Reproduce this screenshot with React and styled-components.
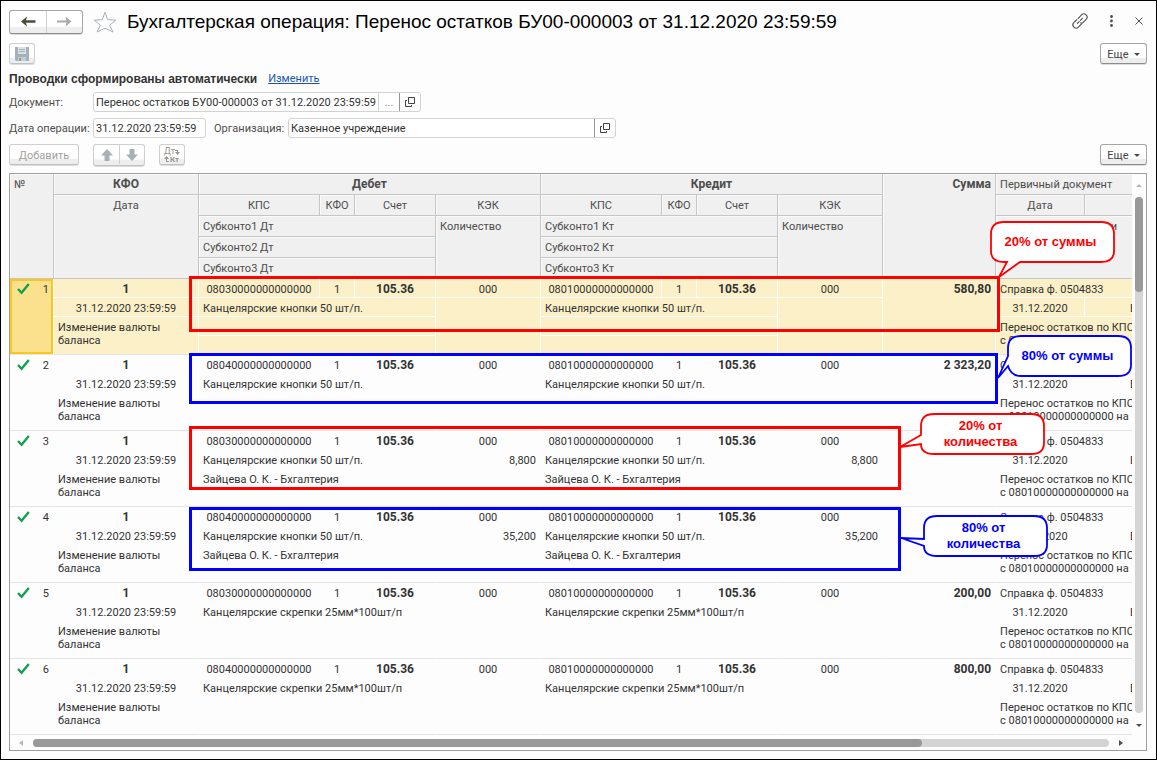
import styled, { createGlobalStyle, css } from "styled-components";

const Colors = {
    page: "#fdfdfd",
    text: "#333333",
    label: "#4d4d4d",
    head: "#f0f0f0",
    line: "#c6c6c6",
    rowLine: "#e4e4e4",
    frame: "#a0a0a0",
    selected: "#fcf0c8",
    current: "#fbe18d",
    currentLine: "#fac71e",
    red: "#ff0000",
    blue: "#0000ff"
};

const GlobalStyle = createGlobalStyle`
    * {
        box-sizing: border-box;
    }

    body {
        margin: 0;
        background: ${Colors.page};
        color: ${Colors.text};
        font-family: Roboto, "Liberation Sans", sans-serif;
        font-size: 11px;
        line-height: 13px;
    }

    button, input {
        font: inherit;
        color: inherit;
    }
`;

const columns = [44, 145, 121, 35, 81, 105, 121, 35, 81, 105, 113, 89, 190];

const entries = [
    { debit: "08030000000000000", sum: "580,80", item: "Канцелярские кнопки 50 шт/п." },
    { debit: "08040000000000000", sum: "2 323,20", item: "Канцелярские кнопки 50 шт/п." },
    {
        debit: "08030000000000000",
        sum: "",
        item: "Канцелярские кнопки 50 шт/п.",
        person: "Зайцева О. К. - Бхгалтерия",
        count: "8,800"
    },
    {
        debit: "08040000000000000",
        sum: "",
        item: "Канцелярские кнопки 50 шт/п.",
        person: "Зайцева О. К. - Бхгалтерия",
        count: "35,200"
    },
    { debit: "08030000000000000", sum: "200,00", item: "Канцелярские скрепки 25мм*100шт/п" },
    { debit: "08040000000000000", sum: "800,00", item: "Канцелярские скрепки 25мм*100шт/п" }
];

// left / top are counted from the inner corner of the grid
const frames = [
    { left: 179, top: 102, width: 811, height: 56, color: Colors.red },
    { left: 179, top: 179, width: 809, height: 51, color: Colors.blue },
    { left: 179, top: 252, width: 712, height: 64, color: Colors.red },
    { left: 179, top: 333, width: 712, height: 64, color: Colors.blue }
];

const callouts = [
    {
        left: 980,
        top: 47,
        color: Colors.red,
        text: "20% от суммы",
        d: "M14 1H111Q124 1 124 13V30Q124 41 111 41H30L9 56L17 41H14Q1 41 1 30V13Q1 1 14 1Z"
    },
    {
        left: 997,
        top: 161,
        color: Colors.blue,
        text: "80% от суммы",
        d: "M14 1H111Q124 1 124 13V30Q124 41 111 41H14Q4 41 1 31L-9 43L1 21V13Q1 1 14 1Z"
    },
    {
        left: 910,
        top: 239,
        color: Colors.red,
        text: "20% от количества",
        d: "M14 1H111Q124 1 124 13V30Q124 41 111 41H14Q1 41 1 31L-20 34L1 22V13Q1 1 14 1Z"
    },
    {
        left: 913,
        top: 341,
        color: Colors.blue,
        text: "80% от количества",
        d: "M14 1H111Q124 1 124 13V30Q124 41 111 41H14Q1 41 1 31L-22 23L1 24V13Q1 1 14 1Z"
    }
];

function OpenIcon() {
    return (
        <svg width="10" height="10" viewBox="0 0 10 10" fill="none" stroke="#404040">
            <path d="M3.5 0.5H9.5V6.5H3.5ZM2 3.5H0.5V9.5H6.5V8" />
        </svg>
    );
}

function CheckIcon() {
    return (
        <svg width="13" height="12" viewBox="0 0 13 12" fill="none" stroke="#12a04c" strokeWidth="2.4">
            <path d="M1 6L4.6 9.8L11.8 1" />
        </svg>
    );
}

function MoreButton() {
    return (
        <Button $width={47}>
            Еще
            <svg width="6" height="3" viewBox="0 0 6 3" fill="#4a4a4a">
                <path d="M0 0H6L3 3Z" />
            </svg>
        </Button>
    );
}

function AccountCells({ code, $selected }) {
    return (
        <>
            <Cell $selected={$selected}>{code}</Cell>
            <Cell $selected={$selected}>1</Cell>
            <Cell $selected={$selected} $bold>
                105.36
            </Cell>
            <Cell $selected={$selected}>000</Cell>
        </>
    );
}

function ItemCells({ item, count, $selected }) {
    return (
        <>
            <Cell $selected={$selected} $align="left" colSpan={3}>
                {item}
            </Cell>
            <Cell $selected={$selected} $align="right" $last rowSpan={3}>
                {count}
            </Cell>
        </>
    );
}

function Entry({ entry, index }) {
    const $selected = index === 0;
    const { debit, sum, item, person, count } = entry;
    return (
        <>
            <tr>
                <NumberCell rowSpan={4} $selected={$selected}>
                    <NumberLine>
                        <CheckIcon />
                        {index + 1}
                    </NumberLine>
                </NumberCell>
                <Cell $selected={$selected} $bold>
                    1
                </Cell>
                {[debit, "08010000000000000"].map(code => (
                    <AccountCells key={code} code={code} $selected={$selected} />
                ))}
                <Cell $selected={$selected} $align="right" $bold $last rowSpan={4}>
                    {sum}
                </Cell>
                <Cell $selected={$selected} $align="left" colSpan={2}>
                    Справка ф. 0504833
                </Cell>
            </tr>
            <tr>
                <Cell $selected={$selected}>31.12.2020 23:59:59</Cell>
                {["debit", "credit"].map(side => (
                    <ItemCells key={side} item={item} count={count} $selected={$selected} />
                ))}
                <Cell $selected={$selected}>31.12.2020</Cell>
                <Cell $selected={$selected} $align="left" $indent>
                    БУ00-000003
                </Cell>
            </tr>
            <tr>
                <Cell $selected={$selected} $align="left" $last rowSpan={2}>
                    Изменение валюты баланса
                </Cell>
                <Cell $selected={$selected} $align="left" colSpan={3}>
                    {person}
                </Cell>
                <Cell $selected={$selected} $align="left" colSpan={3}>
                    {person}
                </Cell>
                <Cell $selected={$selected} $align="left" $last colSpan={2} rowSpan={2}>
                    Перенос остатков по КПС
                    <br />с 08010000000000000 на ...
                </Cell>
            </tr>
            <tr>
                <Cell $selected={$selected} $last colSpan={3} />
                <Cell $selected={$selected} $last colSpan={3} />
            </tr>
        </>
    );
}

function EntriesTable() {
    return (
        <Table>
            <colgroup>
                {columns.map((width, i) => (
                    <Column key={i} $width={width} />
                ))}
            </colgroup>
            <thead>
                <tr>
                    <Head $align="left" rowSpan={5}>
                        №
                    </Head>
                    <Head $bold>КФО</Head>
                    <Head $bold colSpan={4}>
                        Дебет
                    </Head>
                    <Head $bold colSpan={4}>
                        Кредит
                    </Head>
                    <Head $bold $align="right" rowSpan={5}>
                        Сумма
                    </Head>
                    <Head $align="left" colSpan={2}>
                        Первичный документ
                    </Head>
                </tr>
                <tr>
                    <Head rowSpan={4}>Дата</Head>
                    <Head>КПС</Head>
                    <Head>КФО</Head>
                    <Head>Счет</Head>
                    <Head>КЭК</Head>
                    <Head>КПС</Head>
                    <Head>КФО</Head>
                    <Head>Счет</Head>
                    <Head>КЭК</Head>
                    <Head>Дата</Head>
                    <Head>Номер</Head>
                </tr>
                <tr>
                    <Head $align="left" colSpan={3}>
                        Субконто1 Дт
                    </Head>
                    <Head $align="left" rowSpan={3}>
                        Количество
                    </Head>
                    <Head $align="left" colSpan={3}>
                        Субконто1 Кт
                    </Head>
                    <Head $align="left" rowSpan={3}>
                        Количество
                    </Head>
                    <Head $align="left" colSpan={2} rowSpan={3}>
                        Содержание операции
                    </Head>
                </tr>
                {[2, 3].map(n => (
                    <tr key={n}>
                        <Head $align="left" colSpan={3}>
                            Субконто{n} Дт
                        </Head>
                        <Head $align="left" colSpan={3}>
                            Субконто{n} Кт
                        </Head>
                    </tr>
                ))}
            </thead>
            <tbody>
                {entries.map((entry, i) => (
                    <Entry key={i} entry={entry} index={i} />
                ))}
            </tbody>
        </Table>
    );
}

function App() {
    return (
        <>
            <GlobalStyle />
            <Window>
                <TitleBar>
                    <ButtonGroup>
                        <NavButton aria-label="Назад">
                            <svg width="15" height="11" viewBox="0 0 15 11" fill="#4b4b3c">
                                <path d="M0 5.5L6 0.5L5 4.2H14.5V6.8H5L6 10.5Z" />
                            </svg>
                        </NavButton>
                        <NavButton aria-label="Вперед">
                            <svg width="15" height="11" viewBox="0 0 15 11" fill="#a9a9a9">
                                <path d="M14.5 5.5L8.5 0.5L9.5 4.4H0V6.6H9.5L8.5 10.5Z" />
                            </svg>
                        </NavButton>
                    </ButtonGroup>
                    <IconButton aria-label="Добавить в избранное">
                        <svg width="24" height="22" viewBox="0 0 24 22" fill="#ffffff" stroke="#aab0b5">
                            <path d="M12 1.2L14.7 8.7L22.8 9.2L16.6 14.2L20 21L12 17.2L4 21L7.4 14.2L1.2 9.2L9.3 8.7Z" />
                        </svg>
                    </IconButton>
                    <Title>Бухгалтерская операция: Перенос остатков БУ00-000003 от 31.12.2020 23:59:59</Title>
                    <WindowActions>
                        <IconButton aria-label="Ссылка">
                            <svg
                                width="16"
                                height="16"
                                viewBox="0 0 16 16"
                                fill="none"
                                stroke="#4d4d4d"
                                strokeWidth="1.1"
                                strokeLinecap="round"
                            >
                                <path d="M6.2 5.4L9.6 1.9A3.1 3.1 0 0 1 14.2 6.3L11.2 9.3A2.6 2.6 0 0 1 8.8 9.9" />
                                <path d="M9.8 10.6L6.4 14.1A3.1 3.1 0 0 1 1.8 9.7L4.8 6.7" />
                                <path d="M5.4 10.4L7.2 8.6M8.4 7.4L10.4 5.4" />
                            </svg>
                        </IconButton>
                        <IconButton aria-label="Меню">
                            <svg width="3" height="12" viewBox="0 0 3 12" fill="#4d4d4d">
                                <circle cx="1.5" cy="1.5" r="1.4" />
                                <circle cx="1.5" cy="6" r="1.4" />
                                <circle cx="1.5" cy="10.5" r="1.4" />
                            </svg>
                        </IconButton>
                        <IconButton aria-label="Закрыть">
                            <svg width="8" height="8" viewBox="0 0 8 8" stroke="#4d4d4d">
                                <path d="M0.5 0.5L7.5 7.5M7.5 0.5L0.5 7.5" />
                            </svg>
                        </IconButton>
                    </WindowActions>
                </TitleBar>
                <Toolbar>
                    <Button $width={26} $muted aria-label="Записать">
                        <svg width="14" height="14" viewBox="0 0 14 14">
                            <path d="M0 0H14V14H1L0 13Z" fill="#a3b1bb" />
                            <path d="M3 0H11V7H3Z" fill="#dce1e4" />
                            <path d="M4 2H10V3H4ZM4 4H10V5H4Z" fill="#a3b1bb" />
                            <path d="M3 10H11V14H3Z" fill="#c3ccd2" />
                            <path d="M4 11H6V14H4Z" fill="#8c9ba6" />
                        </svg>
                    </Button>
                    <MoreButton />
                </Toolbar>
                <Notice>
                    <strong>Проводки сформированы автоматически</strong>
                    <a href="#edit">Изменить</a>
                </Notice>
                <FieldRow>
                    <Label htmlFor="document" $wide>
                        Документ:
                    </Label>
                    <Field $width={328}>
                        <input
                            id="document"
                            type="text"
                            defaultValue="Перенос остатков БУ00-000003 от 31.12.2020 23:59:59"
                        />
                        <FieldButton aria-label="Выбрать" $light>
                            ...
                        </FieldButton>
                        <FieldButton aria-label="Открыть документ">
                            <OpenIcon />
                        </FieldButton>
                    </Field>
                </FieldRow>
                <FieldRow>
                    <Label htmlFor="date" $wide>
                        Дата операции:
                    </Label>
                    <Field $width={113}>
                        <input id="date" type="text" defaultValue="31.12.2020 23:59:59" />
                    </Field>
                    <Label htmlFor="organization">Организация:</Label>
                    <Field $width={328}>
                        <input id="organization" type="text" defaultValue="Казенное учреждение" />
                        <FieldButton aria-label="Открыть организацию">
                            <OpenIcon />
                        </FieldButton>
                    </Field>
                </FieldRow>
                <Toolbar>
                    <Commands>
                        <Button $width={70} $muted>
                            Добавить
                        </Button>
                        <ButtonGroup $muted>
                            <NavButton $small aria-label="Переместить вверх">
                                <svg width="12" height="12" viewBox="0 0 12 12" fill="#a7b0b6">
                                    <path d="M6 0L12 6.5H8.5V12H3.5V6.5H0Z" />
                                </svg>
                            </NavButton>
                            <NavButton $small aria-label="Переместить вниз">
                                <svg width="12" height="12" viewBox="0 0 12 12" fill="#a7b0b6">
                                    <path d="M6 12L12 5.5H8.5V0H3.5V5.5H0Z" />
                                </svg>
                            </NavButton>
                        </ButtonGroup>
                        <Button $width={26} $muted aria-label="Дт Кт">
                            <svg width="16" height="16" viewBox="0 0 16 16" fill="#9a9590">
                                <text x="0" y="7" fontSize="9">
                                    Дт
                                </text>
                                <text x="6" y="15" fontSize="8" fontWeight="700">
                                    Кт
                                </text>
                                <path d="M11 3H14V5H16L13.5 8L11 5H13V4H11Z" />
                                <path d="M5 15H2V12H0L2.5 9L5 12H3V14H5Z" />
                            </svg>
                        </Button>
                    </Commands>
                    <MoreButton />
                </Toolbar>
                <Grid>
                    <GridBody>
                        <Viewport>
                            <EntriesTable />
                        </Viewport>
                        <VerticalBar>
                            <svg width="6" height="3" viewBox="0 0 6 3" fill="#b8b8b8">
                                <path d="M0 3H6L3 0Z" />
                            </svg>
                            <VerticalTrack>
                                <VerticalThumb />
                            </VerticalTrack>
                            <svg width="6" height="3" viewBox="0 0 6 3" fill="#4d4d4d">
                                <path d="M0 0H6L3 3Z" />
                            </svg>
                        </VerticalBar>
                    </GridBody>
                    <HorizontalBar>
                        <svg width="4" height="6" viewBox="0 0 4 6" fill="#b8b8b8">
                            <path d="M4 0V6L0 3Z" />
                        </svg>
                        <HorizontalTrack>
                            <HorizontalThumb />
                        </HorizontalTrack>
                        <svg width="4" height="6" viewBox="0 0 4 6" fill="#4d4d4d">
                            <path d="M0 0V6L4 3Z" />
                        </svg>
                    </HorizontalBar>
                    {frames.map(frame => (
                        <Frame
                            key={frame.top}
                            $left={frame.left}
                            $top={frame.top}
                            $width={frame.width}
                            $height={frame.height}
                            $color={frame.color}
                        />
                    ))}
                    {callouts.map(({ left, top, color, text, d }) => (
                        <Callout key={text} $left={left} $top={top} $color={color}>
                            <svg width="125" height="42" viewBox="0 0 125 42">
                                <path d={d} fill="#ffffff" stroke={color} strokeWidth="1.8" />
                            </svg>
                            <span>{text}</span>
                        </Callout>
                    ))}
                </Grid>
            </Window>
        </>
    );
}

const Window = styled.main`
    display: flex;
    flex-direction: column;
    min-height: 100vh;
    padding: 8px 9px 8px 8px;
    border: 1px solid #000000;
`;

const TitleBar = styled.header`
    display: flex;
    align-items: center;
    height: 25px;
    margin-bottom: 9px;
    gap: 10px;
`;

const Title = styled.h1`
    flex: 1;
    margin: 0;
    color: #000000;
    font-family: "Liberation Sans", sans-serif;
    font-size: 19px;
    font-weight: 400;
    line-height: 24px;
    white-space: nowrap;
`;

const WindowActions = styled.div`
    display: flex;
    align-items: center;
    gap: 22px;
    padding: 0 4px 2px 0;
`;

const IconButton = styled.button`
    display: flex;
    padding: 0;
    border: 0;
    background: none;
`;

const raised = css`
    border: 1px solid ${props => (props.$muted ? "#cfcfcf" : "#a6a6a6")};
    border-bottom-color: ${props => (props.$muted ? "#c0c0c0" : "#8c8c8c")};
    border-radius: 3px;
    background: linear-gradient(#ffffff 70%, #eeeeee 75%);
    box-shadow: 0 1px 0 #dddddd;
`;

const Button = styled.button`
    ${raised}
    display: flex;
    align-items: center;
    justify-content: center;
    gap: 5px;
    width: ${props => props.$width}px;
    height: 21px;
    padding: 1px 0 0;
    color: ${props => (props.$muted ? "#a0a0a0" : "#444444")};
`;

const ButtonGroup = styled.div`
    ${raised}
    display: flex;
    overflow: hidden;
`;

const NavButton = styled.button`
    display: flex;
    align-items: center;
    justify-content: center;
    width: ${props => (props.$small ? 25 : 36)}px;
    height: ${props => (props.$small ? 19 : 22)}px;
    padding: 0;
    border: 0;
    background: none;

    & + & {
        border-left: 1px solid #d0d0d0;
    }
`;

const Toolbar = styled.div`
    display: flex;
    justify-content: space-between;
    height: 22px;
    margin-bottom: 7px;
`;

const Commands = styled.div`
    display: flex;
    gap: 14px;
`;

const Notice = styled.div`
    display: flex;
    align-items: center;
    gap: 11px;
    height: 14px;
    margin-bottom: 6px;
    line-height: 14px;

    strong {
        font-family: "Liberation Sans", sans-serif;
        font-size: 12px;
    }

    a {
        color: #1a56b0;
    }
`;

const FieldRow = styled.div`
    display: flex;
    align-items: center;
    margin-bottom: 6px;
`;

const Label = styled.label`
    width: ${props => (props.$wide ? 84 : 82)}px;
    padding-left: ${props => (props.$wide ? 0 : 8)}px;
    color: ${Colors.label};
    white-space: nowrap;
`;

const Field = styled.div`
    display: flex;
    width: ${props => props.$width}px;
    height: 20px;
    border: 1px solid #d2d2d2;
    border-radius: 3px;
    background: #ffffff;
    overflow: hidden;

    input {
        flex: 1;
        min-width: 0;
        padding: 0 2px;
        border: 0;
        outline: 0;
        background: none;
    }
`;

const FieldButton = styled.button`
    display: flex;
    align-items: center;
    justify-content: center;
    width: 21px;
    padding: 0;
    border: 0;
    border-left: 1px solid ${props => (props.$light ? "#d2d2d2" : "#959595")};
    background: none;
    color: #808080;
`;

const Grid = styled.section`
    position: relative;
    display: flex;
    flex: 1;
    flex-direction: column;
    border: 1px solid ${Colors.frame};
`;

const GridBody = styled.div`
    display: flex;
    flex: 1;
`;

const Viewport = styled.div`
    flex: 1;
    min-width: 0;
    overflow: hidden;
`;

const Table = styled.table`
    width: 1265px;
    table-layout: fixed;
    border-collapse: separate;
    border-spacing: 0;
`;

const Column = styled.col`
    width: ${props => props.$width}px;
`;

const Head = styled.th`
    height: 21px;
    padding: 4px 4px 3px;
    border-right: 1px solid ${Colors.line};
    border-bottom: 1px solid ${Colors.line};
    background: ${Colors.head};
    box-shadow: inset 1px 1px 0 #fafafa;
    color: ${Colors.label};
    font-size: ${props => (props.$bold ? 12 : 11)}px;
    font-weight: ${props => (props.$bold ? 700 : 400)};
    text-align: ${props => props.$align || "center"};
    vertical-align: top;
    white-space: nowrap;
`;

const Cell = styled.td`
    height: 19px;
    padding: ${props => (props.$indent ? "4px 4px 1px 45px" : "4px 4px 1px")};
    border-right: 1px solid ${Colors.page};
    border-bottom: 1px solid ${props => (props.$last ? Colors.rowLine : Colors.page)};
    background: ${props => (props.$selected ? Colors.selected : Colors.page)};
    font-size: ${props => (props.$bold ? 12 : 11)}px;
    font-weight: ${props => (props.$bold ? 700 : 400)};
    text-align: ${props => props.$align || "center"};
    vertical-align: top;
`;

const NumberCell = styled(Cell)`
    ${props =>
        props.$selected &&
        css`
            background: ${Colors.current};
            box-shadow: inset 0 0 0 2px ${Colors.currentLine};
        `}
    border-bottom-color: ${Colors.rowLine};
`;

const NumberLine = styled.div`
    display: flex;
    justify-content: space-between;
    height: 13px;
    padding-left: 3px;
`;

const VerticalBar = styled.div`
    display: flex;
    flex-direction: column;
    align-items: center;
    width: 14px;
    padding: 10px 0 8px;
`;

const VerticalTrack = styled.div`
    flex: 1;
    width: 8px;
    margin: 10px 0 11px;
    border-radius: 4px;
    background: #d4d4d4;
`;

const VerticalThumb = styled.div`
    height: 95px;
    border-radius: 4px;
    background: #999999;
`;

const HorizontalBar = styled.div`
    display: flex;
    align-items: center;
    height: 15px;
    padding: 0 23px 0 9px;
`;

const HorizontalTrack = styled.div`
    flex: 1;
    height: 8px;
    margin: 0 10px;
    border-radius: 4px;
    background: #d4d4d4;
`;

const HorizontalThumb = styled.div`
    width: 82.6%;
    height: 8px;
    border-radius: 4px;
    background: #999999;
`;

const Frame = styled.div`
    position: absolute;
    left: ${props => props.$left}px;
    top: ${props => props.$top}px;
    width: ${props => props.$width}px;
    height: ${props => props.$height}px;
    border: 3px solid ${props => props.$color};
    pointer-events: none;
`;

const Callout = styled.div`
    position: absolute;
    left: ${props => props.$left}px;
    top: ${props => props.$top}px;
    display: grid;
    place-items: center;
    color: ${props => props.$color};
    font-family: "Liberation Sans", sans-serif;
    font-size: 13px;
    font-weight: 700;
    line-height: 16px;
    text-align: center;

    svg,
    span {
        grid-area: 1 / 1;
    }

    svg {
        overflow: visible;
    }

    span {
        z-index: 1;
        max-width: 100px;
        padding-right: 4px;
    }
`;

export default App;
